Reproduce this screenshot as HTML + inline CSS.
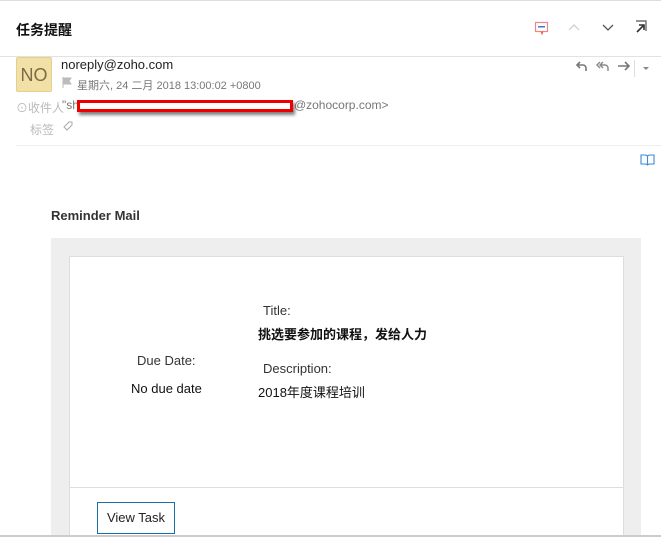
<!DOCTYPE html>
<html><head><meta charset="utf-8"><style>
*{margin:0;padding:0;box-sizing:border-box}
html,body{width:661px;height:537px;overflow:hidden}
body{background:#fff;font-family:"Liberation Sans","Noto Sans CJK SC",sans-serif;position:relative;color:#222}
.a{position:absolute}
</style></head><body>
<div class="a" style="left:0;top:0;width:661px;height:1px;background:#ddd"></div>
<div class="a" style="left:16px;top:20px;font-size:14px;font-weight:bold;color:#111">任务提醒</div>
<div class="a" style="left:0;top:56px;width:661px;height:1px;background:#e2e2e2"></div>
<svg class="a" style="left:534px;top:20px" width="16" height="16"><rect x="1.5" y="2.5" width="12" height="9" fill="none" stroke="#e88" stroke-width="1.2"/><rect x="4" y="6" width="7" height="1.5" fill="#47c"/><path d="M7 11.5l1 2.5 1-2.5" stroke="#e55" fill="none"/></svg>
<svg class="a" style="left:567px;top:22px" width="14" height="10"><path d="M2 8l5-5 5 5" stroke="#ccc" fill="none" stroke-width="1.2"/></svg>
<svg class="a" style="left:601px;top:22px" width="14" height="10"><path d="M2 3l5 5 5-5" stroke="#555" fill="none" stroke-width="1.3"/></svg>
<svg class="a" style="left:634px;top:20px" width="14" height="14"><path d="M2 1h10v10" stroke="#555" fill="none" stroke-width="1.2"/><path d="M3 12l7-7M5 5h5v5" stroke="#333" fill="none" stroke-width="1.6"/></svg>
<div class="a" style="left:16px;top:57px;width:36px;height:35px;background:#f2e1a6;border:1px solid #e6d08e;border-radius:2px;color:#7a6c45;font-size:18px;line-height:34px;text-align:center">NO</div>
<div class="a" style="left:61px;top:57px;font-size:13px;color:#222">noreply@zoho.com</div>
<svg class="a" style="left:62px;top:77px" width="10" height="11"><path d="M1 0v11M1 1h8l-2 3 2 3H1" fill="#bbb" stroke="#bbb"/></svg>
<div class="a" style="left:77px;top:77px;font-size:11px;color:#777">星期六, 24 二月 2018 13:00:02 +0800</div>
<div class="a" style="left:16px;top:99px;font-size:12px;color:#bbb">⊙收件人</div>
<div class="a" style="left:62px;top:98px;font-size:12px;color:#777">"sh<span style="display:inline-block;width:215px"></span>@zohocorp.com&gt;</div>
<div class="a" style="left:77px;top:100px;width:216px;height:12px;border:3px solid #e00;background:#fff;box-shadow:2px 3px 3px rgba(0,0,0,.5)"></div>
<div class="a" style="left:30px;top:121px;font-size:12px;color:#bbb">标签</div>
<svg class="a" style="left:62px;top:120px" width="12" height="12"><path d="M2 7l5-5h3v3l-5 5z" fill="none" stroke="#aaa"/></svg>
<svg class="a" style="left:575px;top:59px" width="14" height="14"><path d="M5 3L2 6l3 3M2 6h6a3 3 0 0 1 3 3v3" fill="none" stroke="#777" stroke-width="1.6"/></svg>
<svg class="a" style="left:595px;top:59px" width="16" height="14"><path d="M5 3L2 6l3 3M8 3L5 6l3 3M5 6h5a3 3 0 0 1 3 3v3" fill="none" stroke="#888" stroke-width="1.4"/></svg>
<svg class="a" style="left:617px;top:59px" width="14" height="14"><path d="M1 7h11M8 3l4 4-4 4" fill="none" stroke="#777" stroke-width="1.6"/></svg>
<div class="a" style="left:634px;top:60px;width:1px;height:17px;background:#ddd"></div>
<div class="a" style="left:643px;top:67px;border:3px solid transparent;border-top-color:#888"></div>
<div class="a" style="left:16px;top:145px;width:645px;height:1px;background:#eee"></div>
<svg class="a" style="left:640px;top:153px" width="15" height="13"><path d="M1 2h5l1.5 1L9 2h5v9H9l-1.5 1L6 11H1z M7.5 3v9" fill="none" stroke="#3a8ad6" stroke-width="1.1"/></svg>
<div class="a" style="left:51px;top:208px;font-size:13px;font-weight:bold;color:#333">Reminder Mail</div>
<div class="a" style="left:51px;top:238px;width:590px;height:299px;background:#eee"></div>
<div class="a" style="left:69px;top:256px;width:555px;height:281px;background:#fff;border:1px solid #ddd;border-bottom:none"></div>
<div class="a" style="left:70px;top:487px;width:553px;height:1px;background:#ddd"></div>
<div class="a" style="left:263px;top:303px;font-size:13px;color:#333">Title:</div>
<div class="a" style="left:258px;top:324px;font-size:13px;font-weight:bold;color:#111">挑选要参加的课程，发给人力</div>
<div class="a" style="left:137px;top:353px;font-size:13px;color:#333">Due Date:</div>
<div class="a" style="left:263px;top:361px;font-size:13px;color:#333">Description:</div>
<div class="a" style="left:131px;top:381px;font-size:13px;color:#111">No due date</div>
<div class="a" style="left:258px;top:382px;font-size:13px;color:#111">2018年度课程培训</div>
<div class="a" style="left:97px;top:502px;width:78px;height:32px;border:1px solid #1a6fa8;font-size:13px;line-height:30px;text-align:center;color:#222">View Task</div>
<div class="a" style="left:0;top:535px;width:661px;height:2px;background:#ccc"></div>
</body></html>
